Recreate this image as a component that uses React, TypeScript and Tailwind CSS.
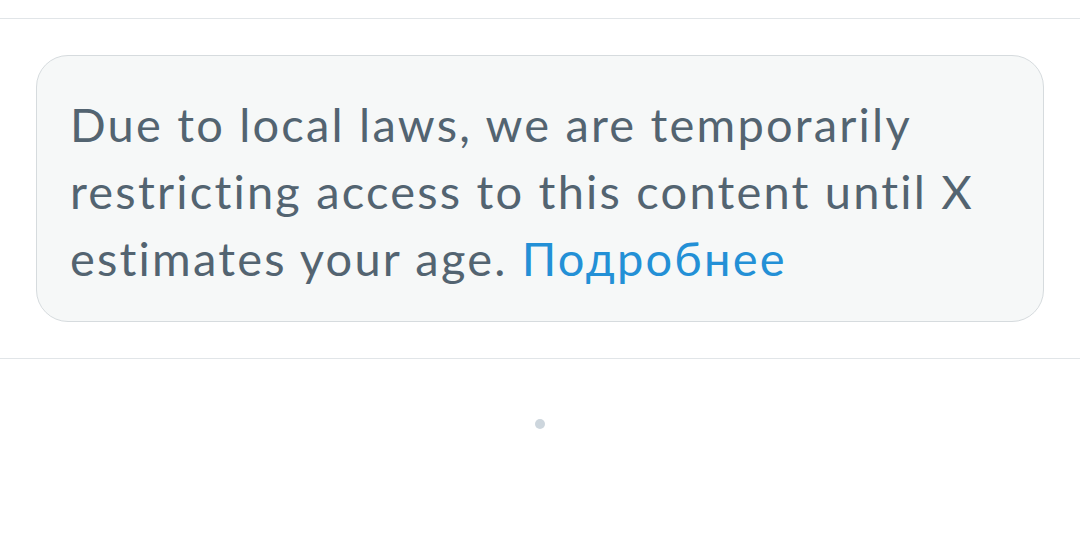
export default function App() {
  return (
    <div className="w-[1080px] h-[538px] bg-white overflow-hidden" style={{ fontFamily: "Lato, 'Noto Sans', sans-serif" }}>
      <div className="h-[19px] border-b border-[#e1e5e8]"></div>
      <div className="px-[36px] pt-[36px] pb-[36px] border-b border-[#e1e5e8]">
        <div className="rounded-[32px] border border-[#d6dbde] bg-[#f6f8f8] px-[33px] pt-[35px] pb-[29px]">
          <p className="text-[47px] leading-[67px] tracking-[2.2px] text-[#536471]">
            Due to local laws, we are temporarily restricting access to this content until X estimates your age.{" "}
            <span className="text-[#2390d6]">Подробнее</span>
          </p>
        </div>
      </div>
      <div className="flex justify-center pt-[60px]">
        <div className="w-[10px] h-[10px] rounded-full bg-[#cdd6dd]"></div>
      </div>
    </div>
  );
}
